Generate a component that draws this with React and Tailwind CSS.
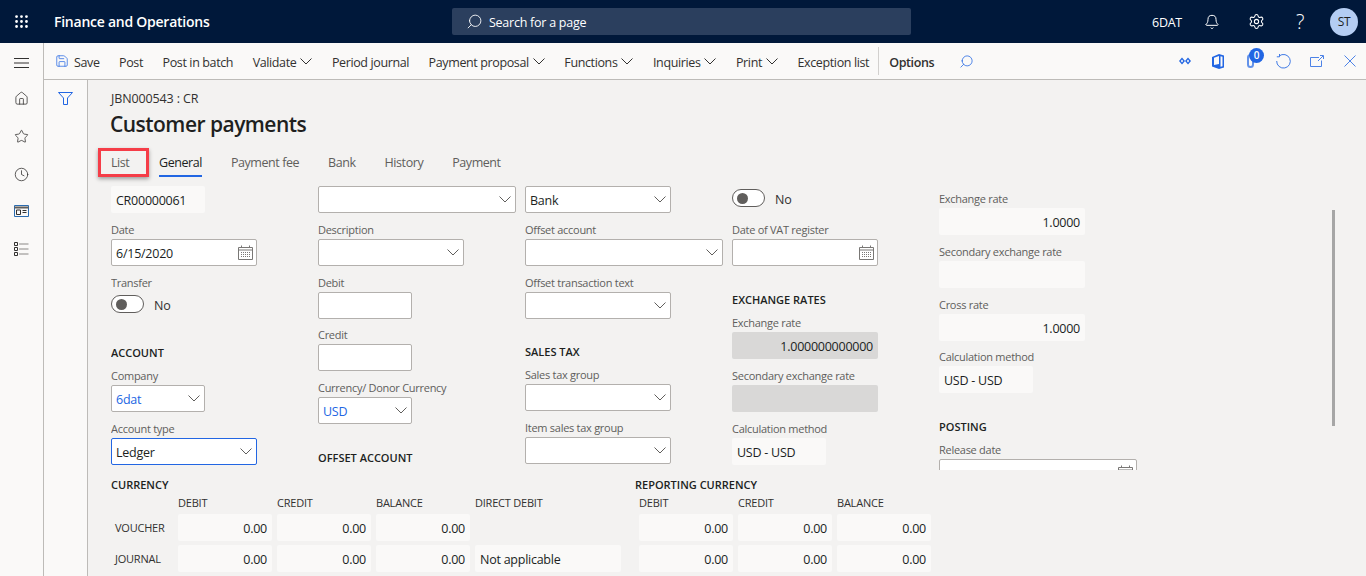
import React from 'react';
import { Grip, Bell, Settings, Search, Save, Home, Star, Clock } from 'lucide-react';

const Chevron = ({ className = 'text-[#605e5c]' }) => (
  <svg width="12" height="7" viewBox="0 0 12 7" fill="none" stroke="currentColor" strokeWidth="1" className={className}>
    <path d="M0.5 0.5 L6 6 L11.5 0.5" />
  </svg>
);

const CalendarIcon = () => (
  <svg width="15" height="15" viewBox="0 0 15 15" fill="none" stroke="#797775" strokeWidth="1">
    <path d="M0.5 2.5 H14.5 V14.5 H0.5 Z" />
    <path d="M0.5 5 H14.5" />
    <path d="M3.5 0.5 V3 M11.5 0.5 V3" />
    <path d="M3 7.5 H12 M3 9.5 H12 M3 11.5 H12" strokeDasharray="1 1" />
  </svg>
);

const WorkspaceIcon = () => (
  <svg width="15" height="12" viewBox="0 0 15 12" fill="none" stroke="#323130" strokeWidth="1">
    <path d="M0.5 0.5 H14.5 V11.5 H0.5 Z" stroke="#2b6cb0" />
    <path d="M0.5 2.5 H14.5" strokeWidth="2" stroke="#605e5c" />
    <path d="M2.5 5 H6.5 V9.5 H2.5 Z" />
    <path d="M8.5 5.5 H12.5 M8.5 7.5 H12.5" />
  </svg>
);

const ListIcon = () => (
  <svg width="15" height="14" viewBox="0 0 15 14" fill="none" stroke="#323130" strokeWidth="1">
    <path d="M0.5 0.5 H3.5 V3.5 H0.5 Z M0.5 5.5 H3.5 V8.5 H0.5 Z M0.5 10.5 H3.5 V13.5 H0.5 Z" />
    <path d="M5 2 H14.5 M5 7 H14.5 M5 12 H14.5" stroke="#8a8886" />
  </svg>
);

const FilterIcon = () => (
  <svg width="15" height="13" viewBox="0 0 15 13" fill="none" stroke="#2266e3" strokeWidth="1">
    <path d="M0.5 0.5 H14.5 L9.5 6 V12.5 H5.5 V6 Z" />
  </svg>
);

const DiamondsIcon = () => (
  <svg width="12" height="8" viewBox="0 0 12 8" fill="#2266e3">
    <path d="M3 0.5 L6 4 L3 7.5 L0 4 Z M3 2.5 L1.8 4 L3 5.5 L4.2 4 Z" fillRule="evenodd" />
    <path d="M9 0.5 L12 4 L9 7.5 L6 4 Z M9 2.5 L7.8 4 L9 5.5 L10.2 4 Z" fillRule="evenodd" />
  </svg>
);

const OfficeIcon = () => (
  <svg width="12" height="15" viewBox="0 0 12 15" fill="#2266e3">
    <path d="M7 0 L12 1.5 V13.5 L7 15 L0 12.5 V3 Z M7 2 L2 3.7 V11 L7 10 Z M8.5 2.2 V12.8 L10.5 12.3 V2.8 Z" fillRule="evenodd" />
  </svg>
);

const RefreshIcon = () => (
  <svg width="15" height="15" viewBox="0 0 15 15" fill="none" stroke="#2266e3" strokeWidth="1" opacity="0.85">
    <path d="M3.2 2 A6.8 6.8 0 1 1 0.7 7" />
    <path d="M3.5 0 V2.8 H0.8" />
  </svg>
);

const PopoutIcon = () => (
  <svg width="14" height="12" viewBox="0 0 14 12" fill="none" stroke="#2266e3" strokeWidth="1" opacity="0.8">
    <path d="M9 2.5 H0.5 V11.5 H11.5 V5.5" />
    <path d="M8 6 L13 1 M10 0.5 H13.5 V4" />
  </svg>
);

const CloseIcon = () => (
  <svg width="12" height="12" viewBox="0 0 12 12" fill="none" stroke="#2266e3" strokeWidth="1" opacity="0.8">
    <path d="M0.5 0.5 L11.5 11.5 M11.5 0.5 L0.5 11.5" />
  </svg>
);

const Label = ({ children }) => (
  <div className="h-[17px] text-[11px] leading-[15px] tracking-[-0.025em] text-[#605e5c]">{children}</div>
);

const Heading = ({ children, className = '' }) => (
  <div className={`h-[17px] text-[11px] leading-[15px] font-semibold tracking-normal text-[#201f1e] ${className}`}>{children}</div>
);

const Input = ({ width, value, icon, focus, blue }) => (
  <div className={`flex h-[27px] items-center justify-between rounded-[2px] border bg-white pl-[4px] ${icon === 'date' ? 'pr-[3px]' : 'pr-[4px]'} ${width} ${focus ? 'border-[#2266e3]' : 'border-[#b3b0ad]'}`}>
    <span className={`pt-[4px] ${blue ? 'text-[#2266e3]' : 'text-[#201f1e]'}`}>{value}</span>
    {icon === 'date' && <CalendarIcon />}
    {icon === 'select' && <Chevron />}
  </div>
);

const ReadOnly = ({ width, value, right, gray }) => (
  <div className={`flex h-[27px] items-center rounded-[2px] px-[5px] pt-[4px] text-[#201f1e] ${width} ${gray ? 'bg-[#d9d8d7]' : 'bg-[#faf9f8]'} ${right ? 'justify-end' : ''}`}>
    {value}
  </div>
);

const Toggle = () => (
  <div className="flex h-[27px] items-center">
    <div className="-mt-[3px] flex h-[18px] w-[33px] items-center rounded-full border border-[#605e5c] bg-white pl-[4px]">
      <div className="h-[11px] w-[11px] rounded-full bg-[#605e5c]" />
    </div>
    <span className="ml-[10px] pt-[2px] text-[#323130]">No</span>
  </div>
);

const Field = ({ label, className = 'mb-[9px]', children }) => (
  <div className={className}>
    <Label>{label}</Label>
    {children}
  </div>
);

const Command = ({ label, menu }) => (
  <div className="flex shrink-0 items-center gap-[4px]">
    <span className="pt-[4px]">{label}</span>
    {menu && <Chevron className="mt-[1px] text-[#323130]" />}
  </div>
);

const tabs = ['General', 'Payment fee', 'Bank', 'History', 'Payment'];

const MoneyRow = ({ label, values, extra }) => (
  <div className="mb-[4px] flex h-[27px] items-center">
    {label && <div className="w-[67px] pl-[4px] pt-[2px] text-[11px] tracking-[-0.02em] text-[#323130]">{label}</div>}
    <div className="flex gap-[5px]">
      {values.map((value, i) => (
        <ReadOnly key={i} width="w-[94px]" value={value} right />
      ))}
      {extra}
    </div>
  </div>
);

export default function App() {
  return (
    <div className="flex h-[576px] w-[1366px] flex-col overflow-hidden bg-[#f3f2f1] font-['Open_Sans',sans-serif] text-[12.5px] tracking-[-0.02em] text-[#201f1e]">
      {/* top bar */}
      <header className="flex h-[43px] shrink-0 items-center bg-[#00183a] text-white">
        <div className="flex w-[43px] justify-center">
          <Grip size={17} strokeWidth={2} />
        </div>
        <div className="ml-[11px] w-[398px] text-[14px] font-semibold">Finance and Operations</div>
        <div className="relative flex h-[27px] w-[459px] items-center rounded-[2px] bg-[#2b3f5e] pl-[37px] pt-[4px]">
          <Search size={17} strokeWidth={1.25} className="absolute left-[14px] top-[5px] -scale-x-100" />
          Search for a page
        </div>
        <div className="ml-auto flex items-center">
          <span className="mr-[8px] pt-[4px]">6DAT</span>
          <div className="flex w-[44px] justify-center"><Bell size={16} strokeWidth={1.5} /></div>
          <div className="flex w-[44px] justify-center"><Settings size={17} strokeWidth={1.5} /></div>
          <div className="flex w-[44px] justify-center text-[20px] font-light leading-none">?</div>
          <div className="ml-[8px] mr-[8px] flex h-[28px] w-[28px] items-center justify-center rounded-full bg-[#b4cdf3] text-[12px] text-[#201f1e]">ST</div>
        </div>
      </header>

      <div className="flex min-h-0 flex-1">
        {/* nav rail */}
        <nav className="flex w-[44px] shrink-0 flex-col items-center border-r border-[#bdbbb8] bg-[#faf9f8] text-[#323130]">
          <svg width="15" height="10" viewBox="0 0 15 10" fill="none" stroke="#323130" className="mt-[15px]">
            <path d="M0 0.5 H15 M0 5 H15 M0 9.5 H15" />
          </svg>
          <Home size={15} strokeWidth={1.25} className="mt-[23px]" />
          <Star size={15} strokeWidth={1.25} className="mt-[23px]" />
          <Clock size={15} strokeWidth={1.25} className="mt-[23px]" />
          <div className="mt-[23px] leading-none"><WorkspaceIcon /></div>
          <div className="mt-[25px] leading-none"><ListIcon /></div>
        </nav>

        <div className="flex min-w-0 flex-1 flex-col">
          {/* command bar */}
          <div className="flex h-[37px] shrink-0 items-center border-b border-[#bdbbb8] bg-[#faf9f8] pl-[11px] tracking-[-0.03em] text-[#323130]">
            <Save size={14} strokeWidth={1.25} className="text-[#2266e3]" />
            <div className="ml-[5px] flex items-center gap-[19.5px]">
              <Command label="Save" />
              <Command label="Post" />
              <Command label="Post in batch" />
              <Command label="Validate" menu />
              <Command label="Period journal" />
              <Command label="Payment proposal" menu />
              <Command label="Functions" menu />
              <Command label="Inquiries" menu />
              <Command label="Print" menu />
              <Command label="Exception list" />
            </div>
            <div className="ml-[9px] h-[28px] w-px bg-[#d2d0ce]" />
            <div className="ml-[10px] pt-[4px] font-semibold">Options</div>
            <Search size={15} strokeWidth={1.25} className="ml-[25px] -scale-x-100 text-[#2266e3]" />
            <div className="ml-auto flex items-center text-[#2266e3]">
              <div className="flex w-[33px] justify-center"><DiamondsIcon /></div>
              <div className="flex w-[33px] justify-center"><OfficeIcon /></div>
              <div className="relative flex w-[33px] justify-center">
                <div className="h-[14px] w-[7px] rounded-full border-2 border-[#2266e3] opacity-70" />
                <div className="absolute left-[15px] -top-[6px] flex h-[15px] w-[15px] items-center justify-center rounded-full bg-[#2266e3] text-[10px] font-semibold text-white">0</div>
              </div>
              <div className="flex w-[33px] justify-center"><RefreshIcon /></div>
              <div className="flex w-[33px] justify-center"><PopoutIcon /></div>
              <div className="flex w-[33px] justify-center"><CloseIcon /></div>
            </div>
          </div>

          <div className="relative flex min-h-0 flex-1">
            {/* filter pane */}
            <div className="flex w-[44px] shrink-0 justify-center border-r border-[#bdbbb8] bg-[#faf9f8] pt-[12px]">
              <div className="leading-none"><FilterIcon /></div>
            </div>

            <main className="min-w-0 flex-1 pl-[23px]">
              <div className="mt-[10px] h-[17px] text-[12.5px] leading-[17px] tracking-[-0.01em] text-[#323130]">JBN000543 : CR</div>
              <h1 className="mt-[2px] -ml-px h-[30px] text-[21px] font-semibold leading-[30px] tracking-[-0.025em]">Customer payments</h1>

              <div className="mt-[8px] flex h-[30px] tracking-[-0.035em] text-[#605e5c]">
                <div className="relative flex w-[48px] items-center border-b-2 border-transparent pt-[4px]">
                  List
                  <div className="absolute -left-[13px] top-[1px] h-[29px] w-[51px] border-[3px] border-[#f53d48] shadow-[0_2px_4px_rgba(0,0,0,0.35)]" />
                </div>
                {tabs.map((tab, i) => (
                  <div key={tab} className={`mr-[29px] flex items-center border-b-2 pt-[4px] ${i === 0 ? 'border-[#2266e3] text-[#201f1e]' : 'border-transparent'}`}>
                    {tab}
                  </div>
                ))}
              </div>

              {/* form columns */}
              <div className="mt-[9px] flex h-[284px] overflow-hidden">
                <div className="w-[207px] shrink-0">
                  <ReadOnly width="w-[94px] mb-[9px]" value="CR00000061" />
                  <Field label="Date"><Input width="w-[146px]" value="6/15/2020" icon="date" /></Field>
                  <Field label="Transfer" className="mb-[26px]"><Toggle /></Field>
                  <Heading className="mb-[6px]">ACCOUNT</Heading>
                  <Field label="Company"><Input width="w-[94px]" value="6dat" icon="select" blue /></Field>
                  <Field label="Account type"><Input width="w-[146px]" value="Ledger" icon="select" focus /></Field>
                </div>
                <div className="w-[207px] shrink-0">
                  <div className="mb-[9px]"><Input width="w-[198px]" icon="select" /></div>
                  <Field label="Description"><Input width="w-[146px]" icon="select" /></Field>
                  <Field label="Debit" className="mb-[8px]"><Input width="w-[94px]" /></Field>
                  <Field label="Credit"><Input width="w-[94px]" /></Field>
                  <Field label="Currency/ Donor Currency" className="mb-[26px]"><Input width="w-[94px]" value="USD" icon="select" blue /></Field>
                  <Heading>OFFSET ACCOUNT</Heading>
                </div>
                <div className="w-[207px] shrink-0">
                  <div className="mb-[9px]"><Input width="w-[146px]" value="Bank" icon="select" /></div>
                  <Field label="Offset account"><Input width="w-[198px]" icon="select" /></Field>
                  <Field label="Offset transaction text" className="mb-[25px]"><Input width="w-[146px]" icon="select" /></Field>
                  <Heading className="mb-[6px]">SALES TAX</Heading>
                  <Field label="Sales tax group"><Input width="w-[146px]" icon="select" /></Field>
                  <Field label="Item sales tax group"><Input width="w-[146px]" icon="select" /></Field>
                </div>
                <div className="w-[207px] shrink-0">
                  <div className="mb-[9px]"><Toggle /></div>
                  <Field label="Date of VAT register" className="mb-[26px]"><Input width="w-[146px]" icon="date" /></Field>
                  <Heading className="mb-[6px]">EXCHANGE RATES</Heading>
                  <Field label="Exchange rate"><ReadOnly width="w-[146px]" value="1.000000000000" right gray /></Field>
                  <Field label="Secondary exchange rate"><ReadOnly width="w-[146px]" gray /></Field>
                  <Field label="Calculation method"><ReadOnly width="w-[94px]" value="USD - USD" /></Field>
                </div>
                <div className="w-[207px] shrink-0 pt-[5px]">
                  <Field label="Exchange rate"><ReadOnly width="w-[146px]" value="1.0000" right /></Field>
                  <Field label="Secondary exchange rate"><ReadOnly width="w-[146px]" /></Field>
                  <Field label="Cross rate" className="mb-[8px]"><ReadOnly width="w-[146px]" value="1.0000" right /></Field>
                  <Field label="Calculation method" className="mb-[26px]"><ReadOnly width="w-[94px]" value="USD - USD" /></Field>
                  <Heading className="mb-[6px]">POSTING</Heading>
                  <Field label="Release date"><Input width="w-[198px]" icon="date" /></Field>
                </div>
              </div>

              {/* totals */}
              <div className="mt-[7px] flex">
                <div className="w-[524px] shrink-0">
                  <Heading>CURRENCY</Heading>
                  <div className="flex h-[20px] pt-[1px] text-[11px] leading-[15px] tracking-[-0.02em] text-[#323130] pl-[67px]">
                    <span className="w-[99px]">DEBIT</span>
                    <span className="w-[99px]">CREDIT</span>
                    <span className="w-[99px]">BALANCE</span>
                    <span>DIRECT DEBIT</span>
                  </div>
                  <MoneyRow label="VOUCHER" values={['0.00', '0.00', '0.00']} />
                  <MoneyRow label="JOURNAL" values={['0.00', '0.00', '0.00']} extra={<ReadOnly width="w-[146px]" value="Not applicable" />} />
                </div>
                <div>
                  <Heading>REPORTING CURRENCY</Heading>
                  <div className="flex h-[20px] pt-[1px] pl-[4px] text-[11px] leading-[15px] tracking-[-0.02em] text-[#323130]">
                    <span className="w-[99px]">DEBIT</span>
                    <span className="w-[99px]">CREDIT</span>
                    <span className="w-[99px]">BALANCE</span>
                  </div>
                  <div className="pl-[4px]">
                    <MoneyRow values={['0.00', '0.00', '0.00']} />
                    <MoneyRow values={['0.00', '0.00', '0.00']} />
                  </div>
                </div>
              </div>
            </main>

            {/* scrollbar */}
            <div className="absolute left-[1288px] top-[130px] h-[216px] w-[3px] bg-[#a6a6a6]" />
          </div>
        </div>
      </div>
    </div>
  );
}
